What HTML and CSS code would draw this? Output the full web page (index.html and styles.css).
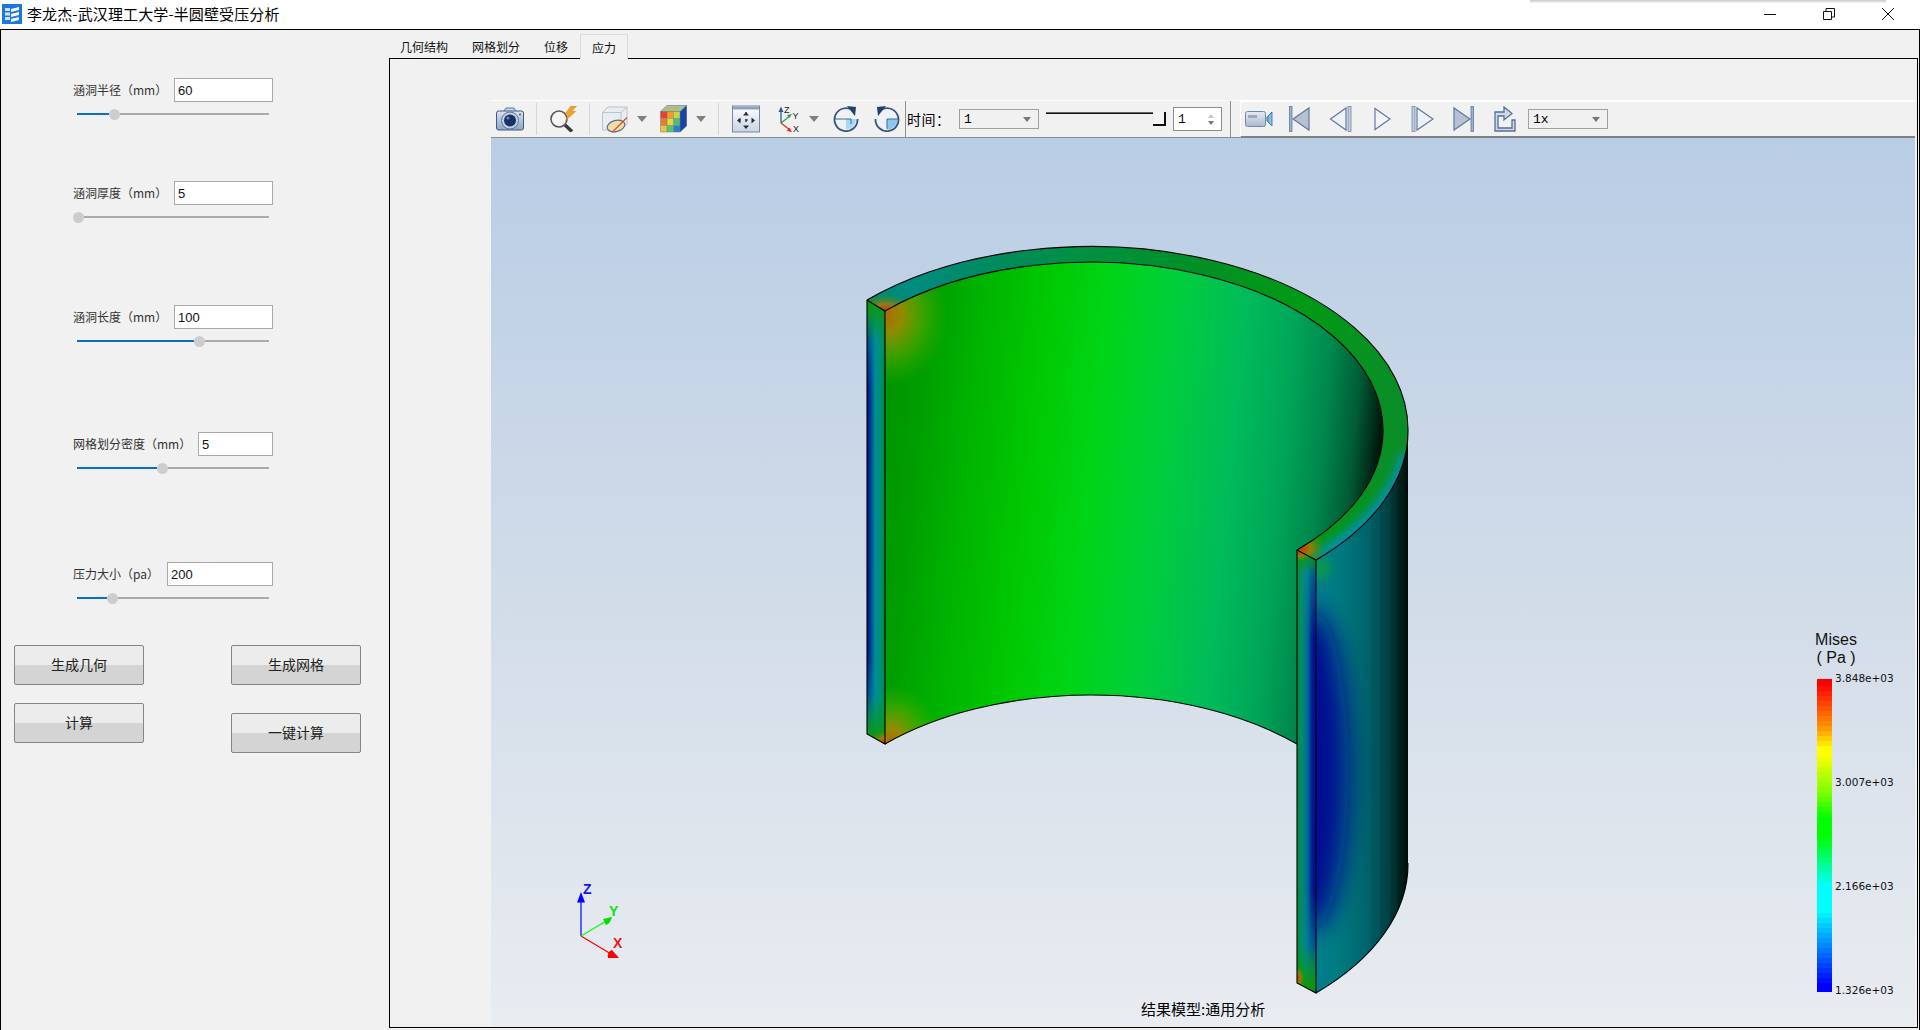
FILE: index.html
```html
<!DOCTYPE html>
<html lang="zh">
<head>
<meta charset="utf-8">
<title>李龙杰-武汉理工大学-半圆壁受压分析</title>
<link rel="stylesheet" href="styles.css">
</head>
<body>
<div class="app">
  <header class="titlebar">
    <svg class="app-icon" width="20" height="20" viewBox="0 0 20 20"><rect width="20" height="20" fill="#1c78e0"/><path d="M3 4h5v3H3zM3 8.500h5v3H3zM3 13h5v3H3z" fill="#cfe4fb"/><path d="M9 5l8-2v3l-8 2zM9 10l8-2v3l-8 2zM9 15l8-2v3l-8 2z" fill="#fff"/></svg>
    <span class="title">李龙杰-武汉理工大学-半圆壁受压分析</span>
    <div class="shadow-strip"></div>
    <div class="win-controls">
      <svg width="12" height="12" viewBox="0 0 12 12"><path d="M0 6.500h12" stroke="#111" fill="none"/></svg>
      <svg width="12" height="12" viewBox="0 0 12 12"><path d="M.5 3.500h8v8h-8zM3 3.500V.5h8.500v8.500H8.500" stroke="#111" fill="none"/></svg>
      <svg width="12" height="12" viewBox="0 0 12 12"><path d="M0 0l12 12M12 0L0 12" stroke="#111" fill="none"/></svg>
    </div>
  </header>
  <main class="main">
    <aside class="side">
      <div class="params">
        <section class="param">
          <div class="param-row"><label class="param-label">涵洞半径（mm）</label><div class="field w-99">60</div></div>
          <div class="slider"><div class="fill" style="width:31.5px"></div><div class="knob"></div><div class="rest"></div></div>
        </section>
        <section class="param">
          <div class="param-row"><label class="param-label">涵洞厚度（mm）</label><div class="field w-99">5</div></div>
          <div class="slider"><div class="knob"></div><div class="rest"></div></div>
        </section>
        <section class="param">
          <div class="param-row"><label class="param-label">涵洞长度（mm）</label><div class="field w-99">100</div></div>
          <div class="slider"><div class="fill" style="width:116.5px"></div><div class="knob"></div><div class="rest"></div></div>
        </section>
        <section class="param">
          <div class="param-row"><label class="param-label">网格划分密度（mm）</label><div class="field w-75">5</div></div>
          <div class="slider"><div class="fill" style="width:79.5px"></div><div class="knob"></div><div class="rest"></div></div>
        </section>
        <section class="param">
          <div class="param-row"><label class="param-label">压力大小（pa）</label><div class="field w-106">200</div></div>
          <div class="slider"><div class="fill" style="width:29.5px"></div><div class="knob"></div><div class="rest"></div></div>
        </section>
      </div>
      <div class="actions">
        <div class="action-col gap-18"><button class="btn">生成几何</button><button class="btn">计算</button></div>
        <div class="action-col gap-28"><button class="btn">生成网格</button><button class="btn">一键计算</button></div>
      </div>
    </aside>
    <section class="work">
      <nav class="tabs">
        <span class="tab">几何结构</span><span class="tab">网格划分</span><span class="tab">位移</span><span class="tab active">应力</span>
      </nav>
      <div class="pane">
        <div class="toolbar">
          <div class="tool-left">
            <svg class="i-camera" width="28" height="24" viewBox="0 0 28 24"><defs><linearGradient id="cam" x1="0" y1="0" x2="0" y2="1"><stop offset="0" stop-color="#dbe2ec"/><stop offset="1" stop-color="#8ea4c2"/></linearGradient></defs><path d="M8 4l2-3h8l2 3" fill="#c9d3e1" stroke="#5d769c"/><rect x=".5" y="4" width="27" height="19" rx="2" fill="url(#cam)" stroke="#3f5a85"/><circle cx="14" cy="13.500" r="8.500" fill="#c2cfdf" stroke="#5c769c"/><circle cx="14" cy="13.500" r="6" fill="#1d2f68"/><circle cx="12" cy="11" r="1.500" fill="#6f86b8"/><circle cx="24" cy="7.500" r="1" fill="#3f5a85"/></svg>
            <span class="sep s-1"></span>
            <svg class="i-mag" width="28" height="26" viewBox="0 0 28 26"><circle cx="10" cy="13" r="8" fill="#f6f6f6" stroke="#5a5a5a" stroke-width="1.600"/><path d="M16 19l7 6.500" stroke="#3a3a3a" stroke-width="3.500"/><path d="M22 0l-6 8h3.500l-3 6.500 10-9h-4l5-5.500z" fill="#f2a422" stroke="#d07a10" stroke-width=".5"/></svg>
            <span class="sep s-2"></span>
            <svg class="i-box" width="28" height="28" viewBox="0 0 28 28"><path d="M1.500 7.500L7 2h19v17l-6 6H1.500z" fill="#e9ecf1" stroke="#b8c2d2"/><path d="M1.500 7.500h18.500V25M20 7.500L26 2" fill="none" stroke="#b8c2d2"/><ellipse cx="15" cy="21" rx="9" ry="5.500" fill="#f2dea4" stroke="#5d6e88" stroke-width="1.200" transform="rotate(-15 15 21)"/><path d="M11 27.500l15-15" stroke="#d0562c" stroke-width="1.300"/></svg>
            <span class="drop d-1"></span>
            <svg class="i-cube" width="27" height="28" viewBox="0 0 27 28"><path d="M20 6.500l6.500-6v20.500l-6.500 6z" fill="#1a3fb0" stroke="#34507e" stroke-width=".6"/><path d="M.5 6.500L7 .5h19.500L20 6.500z" fill="#9ec890" stroke="#5c7696" stroke-width=".6"/><path d="M4 4.500h6l2-2H6zM12 4.500h5l2-2h-5z" fill="#dfa85c"/><rect x=".5" y="6.500" width="6.500" height="7" fill="#e84030"/><rect x="7" y="6.500" width="6.500" height="7" fill="#f09a28"/><rect x="13.500" y="6.500" width="6.500" height="7" fill="#c8d83c"/><rect x=".5" y="13.500" width="6.500" height="7" fill="#ea7c28"/><rect x="7" y="13.500" width="6.500" height="7" fill="#e8d838"/><rect x="13.500" y="13.500" width="6.500" height="7" fill="#48c070"/><rect x=".5" y="20.500" width="6.500" height="6.500" fill="#e8c83a"/><rect x="7" y="20.500" width="6.500" height="6.500" fill="#58c468"/><rect x="13.500" y="20.500" width="6.500" height="6.500" fill="#2a80c8"/><path d="M.5 6.500H20V27H.5zM7 6.500V27M13.500 6.500V27M.5 13.500H20M.5 20.500H20" fill="none" stroke="#6a7a8a" stroke-width=".5"/></svg>
            <span class="drop d-2"></span>
            <span class="sep s-3"></span>
            <svg class="i-fit" width="28" height="28" viewBox="0 0 28 28"><defs><linearGradient id="fitg" x1="0" y1="0" x2="0" y2="1"><stop offset="0" stop-color="#fff"/><stop offset="1" stop-color="#c9d3e0"/></linearGradient></defs><rect x=".5" y="1" width="27" height="26" fill="url(#fitg)" stroke="#7388a8"/><rect x="1" y="1.500" width="26" height="3" fill="#8fa2bd"/><path d="M14 7v16M6 15h16" stroke="#222" stroke-dasharray="3 4" stroke-width="1.200"/><path d="M14 7l-3 3.500h6zM14 24l-3-3.500h6zM5 15.500l3.500-3v6zM23 15.500l-3.500-3v6z" fill="#1f2f4a"/></svg>
            <svg class="i-triad" width="24" height="28" viewBox="0 0 24 28"><path d="M5 18V5" stroke="#2a58a8" stroke-width="1.300"/><path d="M5 1.500L2.500 7h5z" fill="#2a58a8"/><path d="M5 18l9-7" stroke="#28a048" stroke-width="1.300"/><path d="M16 9l-5 1 2.500 3z" fill="#28a048"/><path d="M5 18l9 7" stroke="#e03030" stroke-width="1.300"/><path d="M16 27l-5.500-1 3-3.500z" fill="#e03030"/><text class="triad-text" x="8" y="8">Z</text><text class="triad-text" x="16.500" y="14">Y</text><text class="triad-text" x="17" y="27">X</text></svg>
            <span class="drop d-3"></span>
            <svg class="i-rot1" width="26" height="26" viewBox="0 0 26 26"><path d="M13 13h10a10.500 10.500 0 0 1-10 10.500z" fill="#a9d8f2"/><path d="M13 13h5v5" fill="none" stroke="#2f6ea8"/><path d="M20 4.500A11.500 11.500 0 1 0 24.500 13" fill="none" stroke="#34557f" stroke-width="1.800"/><path d="M14 0l9 1-1 9z" fill="#1f3f70"/><path d="M2 13h11" stroke="#2f6ea8"/></svg>
            <svg class="i-rot2" width="26" height="26" viewBox="0 0 26 26"><path d="M13 13h10.500A10.500 10.500 0 0 1 13 23.500z" fill="#8cc8ee"/><path d="M13 13v10M13 13h11" stroke="#2f6ea8"/><path d="M6 4.500A11.500 11.500 0 1 1 1.500 13" fill="none" stroke="#34557f" stroke-width="1.800"/><path d="M12 0L3 1l1 9z" fill="#1f3f70"/></svg>
            <span class="vdiv v-1"></span>
            <span class="time-label">时间：</span>
            <div class="combo w-80"><span>1</span><i class="combo-arrow"></i></div>
            <div class="time-slider"><div class="ts-line"></div><div class="ts-handle"></div></div>
            <div class="spin"><span>1</span><div class="spin-arrows"><i class="up"></i><i class="down"></i></div></div>
            <span class="vdiv v-2"></span>
          </div>
          <div class="tool-right">
            <svg class="i-video" width="28" height="20" viewBox="0 0 28 20"><defs><linearGradient id="vid" x1="0" y1="0" x2="0" y2="1"><stop offset="0" stop-color="#e6ebf2"/><stop offset="1" stop-color="#a9b9d0"/></linearGradient></defs><rect x=".5" y="2.500" width="20" height="15" rx="2" fill="url(#vid)" stroke="#6f86a8"/><rect x="3" y="6" width="9" height="3" fill="#9aa9bf"/><path d="M21 9l2-2v6l-2-2z" fill="#b0bfd4" stroke="#6f86a8" stroke-width=".7"/><path d="M23 7l4-4v14l-4-4z" fill="#7cc4e6" stroke="#2a6ca0" stroke-width=".8"/></svg>
            <svg class="i-first" width="21" height="26" viewBox="0 0 21 26"><rect x=".5" y=".5" width="2.500" height="25" fill="#9fb0c8" stroke="#5f7aa0" stroke-width=".8"/><path d="M20 2v22L4 13z" fill="#b6c2d2" stroke="#5f7aa0" stroke-width="1.200"/></svg>
            <svg class="i-prev" width="23" height="26" viewBox="0 0 23 26"><path d="M17 2v22L1.500 13z" fill="#eef1f5" stroke="#5f7aa0" stroke-width="1.200"/><rect x="19" y=".5" width="3" height="25" fill="#c3cedd" stroke="#7088aa" stroke-width=".8"/></svg>
            <svg class="i-play" width="17" height="26" viewBox="0 0 17 26"><path d="M1 2.500v21L16 13z" fill="#f2f4f7" stroke="#5f7aa0" stroke-width="1.200"/></svg>
            <svg class="i-next" width="23" height="26" viewBox="0 0 23 26"><rect x="1" y=".5" width="3" height="25" fill="#c3cedd" stroke="#7088aa" stroke-width=".8"/><path d="M6 2v22l16-11z" fill="#eef1f5" stroke="#5f7aa0" stroke-width="1.200"/></svg>
            <svg class="i-last" width="21" height="26" viewBox="0 0 21 26"><path d="M1 2v22l16-11z" fill="#b6c2d2" stroke="#5f7aa0" stroke-width="1.200"/><rect x="18" y=".5" width="2.500" height="25" fill="#9fb0c8" stroke="#5f7aa0" stroke-width=".8"/></svg>
            <svg class="i-export" width="24" height="26" viewBox="0 0 24 26"><path d="M2 25h20V14h-3v8H5V10h6v4l8-6.500L11 1v5H2z" fill="#cfd9e6" stroke="#54709a" stroke-width="1.300"/></svg>
            <div class="combo w-80 c-speed"><span>1x</span><i class="combo-arrow"></i></div>
          </div>
        </div>
        <div class="viewport">
          <svg class="scene" viewBox="491 138 1424 889" width="1424" height="889">
            <defs>
              <linearGradient id="gInner" gradientUnits="userSpaceOnUse" x1="885" y1="400" x2="1383" y2="450">
                <stop offset="0" stop-color="#009400"/><stop offset=".07" stop-color="#009e00"/><stop offset=".17" stop-color="#00b300"/><stop offset=".31" stop-color="#00ca02"/><stop offset=".42" stop-color="#00d416"/><stop offset=".55" stop-color="#00cf3a"/><stop offset=".7" stop-color="#00bb5a"/><stop offset=".8" stop-color="#00a658"/><stop offset=".88" stop-color="#00864c"/><stop offset=".94" stop-color="#005c36"/><stop offset=".98" stop-color="#002816"/><stop offset="1" stop-color="#000c06"/>
              </linearGradient>
              <linearGradient id="gRim" gradientUnits="userSpaceOnUse" x1="867" y1="0" x2="1408" y2="0">
                <stop offset="0" stop-color="#008a68"/><stop offset=".08" stop-color="#008c80"/><stop offset=".22" stop-color="#008a60"/><stop offset=".38" stop-color="#009044"/><stop offset=".62" stop-color="#009024"/><stop offset=".8" stop-color="#009a14"/><stop offset="1" stop-color="#0a8c2a"/>
              </linearGradient>
              <linearGradient id="gWall" gradientUnits="userSpaceOnUse" x1="1316" y1="0" x2="1408" y2="0">
                <stop offset="0" stop-color="#007f8c"/><stop offset=".25" stop-color="#007a80"/><stop offset=".45" stop-color="#006c72"/><stop offset=".6" stop-color="#006068"/><stop offset=".6" stop-color="#005a60"/><stop offset=".7" stop-color="#00505a"/><stop offset=".7" stop-color="#004a4e"/><stop offset=".8" stop-color="#004044"/><stop offset=".8" stop-color="#003a3a"/><stop offset=".88" stop-color="#002e2c"/><stop offset=".88" stop-color="#002624"/><stop offset=".95" stop-color="#001a16"/><stop offset="1" stop-color="#000c08"/>
              </linearGradient>
              <linearGradient id="gLeft" gradientUnits="userSpaceOnUse" x1="867" y1="0" x2="885" y2="0">
                <stop offset="0" stop-color="#000a8c"/><stop offset=".2" stop-color="#00408e"/><stop offset=".45" stop-color="#008c98"/><stop offset=".75" stop-color="#008e78"/><stop offset="1" stop-color="#00883c"/>
              </linearGradient>
              <linearGradient id="gLeftTeal" gradientUnits="userSpaceOnUse" x1="867" y1="0" x2="885" y2="0">
                <stop offset="0" stop-color="#007a8e"/><stop offset=".5" stop-color="#009098"/><stop offset="1" stop-color="#009060"/>
              </linearGradient>
              <linearGradient id="gRight" gradientUnits="userSpaceOnUse" x1="1297" y1="0" x2="1316" y2="0">
                <stop offset="0" stop-color="#0a8e30"/><stop offset=".3" stop-color="#00887a"/><stop offset=".55" stop-color="#006a90"/><stop offset=".8" stop-color="#001c94"/><stop offset="1" stop-color="#00088c"/>
              </linearGradient>
              <linearGradient id="gRightTeal" gradientUnits="userSpaceOnUse" x1="1297" y1="0" x2="1316" y2="0">
                <stop offset="0" stop-color="#0a9030"/><stop offset=".4" stop-color="#008c90"/><stop offset="1" stop-color="#007090"/>
              </linearGradient>
              <linearGradient id="fadeDown" x1="0" y1="0" x2="0" y2="1"><stop offset="0" stop-color="#fff"/><stop offset="1" stop-color="#000"/></linearGradient>
              <linearGradient id="fadeUp" x1="0" y1="1" x2="0" y2="0"><stop offset="0" stop-color="#fff"/><stop offset="1" stop-color="#000"/></linearGradient>
              <linearGradient id="greenDown" x1="0" y1="0" x2="0" y2="1"><stop offset="0" stop-color="#0c9a00"/><stop offset="1" stop-color="#0c9a00" stop-opacity="0"/></linearGradient>
              <linearGradient id="greenUp" x1="0" y1="1" x2="0" y2="0"><stop offset="0" stop-color="#0c9a00"/><stop offset="1" stop-color="#0c9a00" stop-opacity="0"/></linearGradient>
              <mask id="mTop" maskUnits="userSpaceOnUse" x="860" y="300" width="560" height="700"><rect x="860" y="300" width="30" height="90" fill="url(#fadeDown)"/><rect x="1290" y="550" width="30" height="90" fill="url(#fadeDown)"/></mask>
              <mask id="mBot" maskUnits="userSpaceOnUse" x="860" y="300" width="560" height="700"><rect x="860" y="650" width="30" height="84" fill="url(#fadeUp)"/><rect x="860" y="734" width="30" height="12" fill="#fff"/><rect x="1290" y="890" width="30" height="80" fill="url(#fadeUp)"/><rect x="1290" y="970" width="30" height="25" fill="#fff"/></mask>
              <radialGradient id="hot1"><stop offset="0" stop-color="#b06a00"/><stop offset=".25" stop-color="#a08a00" stop-opacity=".9"/><stop offset=".6" stop-color="#70a800" stop-opacity=".5"/><stop offset="1" stop-color="#40b000" stop-opacity="0"/></radialGradient>
              <radialGradient id="hot2"><stop offset="0" stop-color="#d03800"/><stop offset=".4" stop-color="#b87800" stop-opacity=".75"/><stop offset="1" stop-color="#409000" stop-opacity="0"/></radialGradient>
              <filter id="blur4" x="-30%" y="-30%" width="160%" height="160%"><feGaussianBlur stdDeviation="4"/></filter>
              <filter id="blur13" x="-100%" y="-30%" width="300%" height="160%"><feGaussianBlur stdDeviation="13"/></filter>
              <clipPath id="cRim"><path d="M867 300A317 183 0 0 1 1408 430A317 183 0 0 1 1316 560L1297 550A292 168 0 0 0 1383 430A292 168 0 0 0 885 311Z"/></clipPath>
              <clipPath id="cInner"><path d="M885 311A292 168 0 0 1 1383 430A292 168 0 0 1 1297 550L1297 744A292 168 0 0 0 885 744Z"/></clipPath>
              <clipPath id="cWall"><path d="M1316 560A317 183 0 0 0 1408 430L1408 863A317 183 0 0 1 1316 993Z"/></clipPath>
              <clipPath id="cLeft"><path d="M867 300L885 311L885 744L867 734Z"/></clipPath>
              <clipPath id="cRight"><path d="M1297 550L1316 560L1316 993L1297 983Z"/></clipPath>
            </defs>

            <g clip-path="url(#cInner)">
              <rect x="880" y="255" width="510" height="495" fill="url(#gInner)"/>
              <ellipse cx="887" cy="315" rx="62" ry="72" fill="url(#hot1)"/>
              <ellipse cx="890" cy="742" rx="52" ry="58" fill="url(#hot1)"/>
            </g>
            <g clip-path="url(#cRim)">
              <rect x="860" y="240" width="555" height="330" fill="url(#gRim)"/>
              <path d="M1408 455A317 183 0 0 1 1316 560" fill="none" stroke="#0090a8" stroke-width="16" filter="url(#blur4)"/>
              <ellipse cx="885" cy="310" rx="30" ry="16" fill="url(#hot2)"/>
              <ellipse cx="1302" cy="548" rx="24" ry="20" fill="url(#hot2)"/>
            </g>
            <g clip-path="url(#cWall)">
              <rect x="1310" y="420" width="105" height="580" fill="url(#gWall)"/>
              <ellipse cx="1312" cy="770" rx="36" ry="160" fill="#000c92" filter="url(#blur13)"/>
              <ellipse cx="1316" cy="568" rx="16" ry="12" fill="#10a040" opacity=".7" filter="url(#blur4)"/>
            </g>
            <g clip-path="url(#cLeft)">
              <rect x="865" y="295" width="22" height="455" fill="url(#gLeft)"/>
              <rect x="865" y="295" width="22" height="455" fill="url(#gLeftTeal)" mask="url(#mTop)"/>
              <rect x="865" y="295" width="22" height="455" fill="url(#gLeftTeal)" mask="url(#mBot)"/>
              <rect x="865" y="300" width="22" height="42" fill="url(#greenDown)"/>
              <rect x="865" y="695" width="22" height="50" fill="url(#greenUp)"/>
              <ellipse cx="884" cy="742" rx="14" ry="12" fill="url(#hot2)"/>
            </g>
            <g clip-path="url(#cRight)">
              <rect x="1295" y="545" width="23" height="450" fill="url(#gRight)"/>
              <rect x="1295" y="545" width="23" height="450" fill="url(#gRightTeal)" mask="url(#mTop)"/>
              <rect x="1295" y="545" width="23" height="450" fill="url(#gRightTeal)" mask="url(#mBot)"/>
              <rect x="1295" y="550" width="23" height="25" fill="url(#greenDown)"/>
              <rect x="1295" y="945" width="23" height="45" fill="url(#greenUp)"/>
              <ellipse cx="1299" cy="553" rx="14" ry="9" fill="url(#hot2)"/>
              <ellipse cx="1298" cy="978" rx="7" ry="12" fill="url(#hot2)"/>
            </g>
            <g class="edges">
              <path d="M867 300A317 183 0 0 1 1408 430A317 183 0 0 1 1316 560L1297 550A292 168 0 0 0 1383 430A292 168 0 0 0 885 311L867 300"/>
              <path d="M867 300V734L885 744V311M1297 550V983L1316 993V560"/>
              <path d="M885 744A292 168 0 0 1 1297 744"/>
              <path d="M1316 993A317 183 0 0 0 1408 863"/>
            </g>
            <g class="triad">
              <path d="M581 936V896" stroke="#0000ff" stroke-width="1.200" fill="none"/>
              <path d="M581 892l-4 10.500h8z" fill="#0000ff"/>
              <path d="M581 936l27-16" stroke="#00ff00" stroke-width="1.200" fill="none"/>
              <path d="M612 917l-9 2 3 6c3-1 5-4 6-8z" fill="#00e000"/>
              <path d="M581 936l30 18" stroke="#ff0000" stroke-width="1.200" fill="none"/>
              <path d="M619 958l-11 0c-1-4 1-7 4-8z" fill="#ff0000"/>
              <text class="axis ax-z" x="583" y="894">Z</text>
              <text class="axis ax-y" x="609" y="916">Y</text>
              <text class="axis ax-x" x="613" y="948">X</text>
            </g>
          </svg>
          <div class="caption">结果模型:通用分析</div>
          <div class="legend">
            <div class="legend-title">Mises<br>( Pa )</div>
            <div class="legend-body">
              <div class="legend-bar"></div>
              <div class="legend-ticks"><span>3.848e+03</span><span>3.007e+03</span><span>2.166e+03</span><span>1.326e+03</span></div>
            </div>
          </div>
        </div>
      </div>
    </section>
  </main>
</div>
</body>
</html>
```

FILE: styles.css
```css
* { box-sizing: border-box; }
html, body { margin: 0; height: 100%; overflow: hidden; background: #fff; }
body { font-family: "Noto Sans CJK SC", "Liberation Sans", sans-serif; color: #111; }
.app { width: 1920px; height: 1030px; display: flex; flex-direction: column; }

.titlebar { height: 29px; flex: none; display: flex; align-items: center; padding-left: 2px; background: #fff; position: relative; }
.app-icon { flex: none; margin-top: -1px; }
.title { margin-left: 5px; font-size: 15px; letter-spacing: .12px; line-height: 20px; color: #000; white-space: nowrap; margin-top: -1px; }
.shadow-strip { position: absolute; left: 1530px; right: 34px; top: 0; height: 3px; background: linear-gradient(#c8c8c8, #f8f8f8); }
.win-controls { position: absolute; right: 26px; top: 8px; display: flex; gap: 47px; }

.main { flex: 1; display: flex; background: #f1f1f1; border-top: 1px solid #000; border-right: 1px solid #000; min-height: 0; }

.side { width: 389px; flex: none; border-left: 1px solid #000; display: flex; flex-direction: column; }
.params { display: grid; grid-template-rows: 103px 124px 127px 130px 83px; padding: 48px 0 0 72px; }
.param { width: 200px; }
.param-row { display: flex; justify-content: space-between; align-items: center; height: 24px; }
.param-label { font-size: 12px; color: #333; white-space: nowrap; line-height: 24px; }
.field { height: 24px; border: 1px solid #a9a9a9; background: #fff; padding-left: 3px; font: 13px/24px "Liberation Sans", sans-serif; color: #111; }
.w-99 { width: 99px; }
.w-75 { width: 75px; }
.w-106 { width: 106px; }
.slider { display: flex; align-items: center; height: 11px; margin-top: 6.5px; width: 196px; }
.fill { height: 2px; margin-left: 4px; background: #0b6fc4; flex: none; }
.knob { width: 11px; height: 11px; border-radius: 50%; background: #cdcdcd; flex: none; }
.rest { flex: 1; height: 2px; background: #aaa; }

.actions { display: flex; padding-left: 13px; gap: 87px; }
.action-col { display: flex; flex-direction: column; }
.gap-18 { gap: 18px; }
.gap-28 { gap: 28px; }
.btn { width: 130px; height: 40px; padding: 0 0 2px; border: 1px solid #858585; border-radius: 2px; background: linear-gradient(#ececec 0 50%, #d4d4d4 50% 100%); font: 14px/1 "Noto Sans CJK SC", sans-serif; color: #222; }

.work { flex: 1; display: flex; flex-direction: column; min-width: 0; }
.tabs { height: 28px; flex: none; display: flex; align-items: flex-end; margin-left: -1px; }
.tab { height: 24px; width: auto; padding: 0 12px; font-size: 12px; line-height: 25px; color: #111; }
.tab.active { background: #f2f2f2; border: 1px solid #d9d9d9; border-bottom: none; padding: 0 11px; height: 25px; margin-bottom: -1px; position: relative; z-index: 1; }

.pane { height: 970px; flex: none; margin-right: 1px; border: 1px solid #000; padding: 41px 0 0 101px; display: flex; flex-direction: column; }

.toolbar { height: 38px; flex: none; display: flex; margin-right: 2px; background: #f1f1f1; }
.tool-left { display: flex; align-items: center; border-top: 1px solid #fff; border-bottom: 1px solid #8a8a8a; width: 749px; flex: none; }
.tool-right { flex: 1; display: flex; align-items: center; border-top: 2px solid #fff; border-left: 1px solid #fff; border-bottom: 2px solid #808080; }
.toolbar svg { flex: none; }
.sep { width: 1px; height: 32px; background: #d6d6d6; flex: none; }
.vdiv { width: 1px; height: 37px; background: #8f8f8f; flex: none; }
.i-camera { margin-left: 5px; }
.s-1 { margin-left: 12px; }
.i-mag { margin-left: 12px; }
.s-2 { margin-left: 12px; }
.i-box { margin-left: 11px; }
.d-1 { margin-left: 8px; }
.i-cube { margin-left: 13px; }
.d-2 { margin-left: 9px; }
.s-3 { margin-left: 12px; }
.i-fit { margin-left: 13px; }
.i-triad { margin-left: 16px; }
.d-3 { margin-left: 9px; }
.i-rot1 { margin-left: 14px; }
.i-rot2 { margin-left: 15px; }
.v-1 { margin-left: 5px; }
.drop { width: 0; height: 0; border-left: 5px solid transparent; border-right: 5px solid transparent; border-top: 6px solid #808080; flex: none; }
.time-label { width: 53px; flex: none; font-size: 14px; padding-left: 1px; color: #000; white-space: nowrap; letter-spacing: .5px; }
.combo { height: 20px; border: 1px solid #a0a0a0; background: #f1f1f1; display: flex; align-items: center; justify-content: space-between; padding: 0 7px 0 4px; font: 13px "Liberation Mono", monospace; color: #000; flex: none; }
.w-80 { width: 80px; }
.combo-arrow { width: 0; height: 0; border-left: 4.500px solid transparent; border-right: 4.500px solid transparent; border-top: 5px solid #777; }
.time-slider { width: 120px; height: 14px; margin-left: 7px; display: flex; margin-top: -1px; flex: none; }
.ts-line { flex: 1; height: 2px; background: #111; border-top: 1px solid #666; }
.ts-handle { width: 13px; height: 14px; background: #f4f4f4; border-right: 2px solid #111; border-bottom: 2px solid #111; }
.spin { width: 49px; height: 24px; margin-left: 7px; border: 1px solid #8c8c8c; background: #fff; display: flex; align-items: center; justify-content: space-between; padding: 0 7px 0 4px; font: 13px "Liberation Mono", monospace; flex: none; }
.spin-arrows { display: flex; flex-direction: column; gap: 3px; }
.spin-arrows i { width: 0; height: 0; border-left: 3px solid transparent; border-right: 3px solid transparent; }
.spin-arrows .up { border-bottom: 4px solid #c4c4c4; }
.spin-arrows .down { border-top: 4px solid #777; }
.v-2 { margin-left: 8px; }
.triad-text { font: 9px "Liberation Sans", sans-serif; fill: #222; }

.i-video { margin-left: 4px; }
.i-first { margin-left: 16px; }
.i-prev { margin-left: 19px; }
.i-play { margin-left: 22px; }
.i-next { margin-left: 20px; }
.i-last { margin-left: 19px; }
.i-export { margin-left: 19px; }
.c-speed { margin-left: 11px; }

.viewport { flex: 1; margin-right: 2px; position: relative; min-height: 0; overflow: hidden; background: linear-gradient(#b9cde5 0%, #d3dde9 55%, #e9ecf1 100%); }
.scene { display: block; }
.edges path { fill: none; stroke: #000; stroke-width: 1.1; }
.axis { font: bold 14px "Liberation Sans", sans-serif; }
.ax-z { fill: #1515f0; }
.ax-y { fill: #10e010; }
.ax-x { fill: #f01515; }

.caption { position: absolute; left: 650px; top: 861px; font-size: 15px; line-height: 20px; color: #000; white-space: nowrap; }
.legend { position: absolute; left: 1324px; top: 493px; }
.legend-title { font: 16px/18px "Liberation Sans", sans-serif; color: #111; width: 48px; text-align: center; margin-left: -3px; height: 48px; }
.legend-body { display: flex; }
.legend-bar { margin-left: 2px; width: 15px; height: 313px; background: linear-gradient(
  hsl(0 100% 50%) 0 7px, hsl(4 100% 50%) 0 12px, hsl(8 100% 50%) 0 17px, hsl(12 100% 50%) 0 22px, hsl(16 100% 50%) 0 27px, hsl(20 100% 50%) 0 32px, hsl(24 100% 50%) 0 37px, hsl(28 100% 50%) 0 42px, hsl(32 100% 50%) 0 47px, hsl(36 100% 50%) 0 52px, hsl(42 100% 50%) 0 57px, hsl(48 100% 50%) 0 62px, hsl(54 100% 50%) 0 67px, hsl(60 100% 50%) 0 78px,
  hsl(64 100% 50%) 0 83px, hsl(68 100% 50%) 0 88px, hsl(72 100% 50%) 0 93px, hsl(76 100% 50%) 0 98px, hsl(80 100% 50%) 0 103px, hsl(84 100% 50%) 0 108px, hsl(88 100% 50%) 0 113px, hsl(92 100% 50%) 0 118px, hsl(98 100% 50%) 0 123px, hsl(104 100% 50%) 0 128px, hsl(110 100% 50%) 0 133px, hsl(116 100% 50%) 0 138px, hsl(120 100% 50%) 0 158px,
  hsl(124 100% 50%) 0 163px, hsl(130 100% 50%) 0 168px, hsl(136 100% 50%) 0 173px, hsl(142 100% 50%) 0 178px, hsl(148 100% 50%) 0 183px, hsl(154 100% 50%) 0 188px, hsl(160 100% 50%) 0 193px, hsl(166 100% 50%) 0 198px, hsl(172 100% 50%) 0 203px, hsl(178 100% 50%) 0 208px, hsl(180 100% 50%) 0 234px,
  hsl(184 100% 50%) 0 239px, hsl(188 100% 50%) 0 244px, hsl(192 100% 50%) 0 249px, hsl(196 100% 50%) 0 254px, hsl(200 100% 50%) 0 259px, hsl(204 100% 50%) 0 264px, hsl(208 100% 50%) 0 269px, hsl(212 100% 50%) 0 274px, hsl(216 100% 50%) 0 279px, hsl(220 100% 50%) 0 284px, hsl(224 100% 50%) 0 289px, hsl(228 100% 50%) 0 294px, hsl(232 100% 50%) 0 299px, hsl(236 100% 50%) 0 304px, hsl(240 100% 50%) 0 313px); }
.legend-ticks { margin: -8px 0 0 3px; height: 326px; display: flex; flex-direction: column; justify-content: space-between; font: 10.500px/14px "DejaVu Sans", sans-serif; color: #111; }
```
